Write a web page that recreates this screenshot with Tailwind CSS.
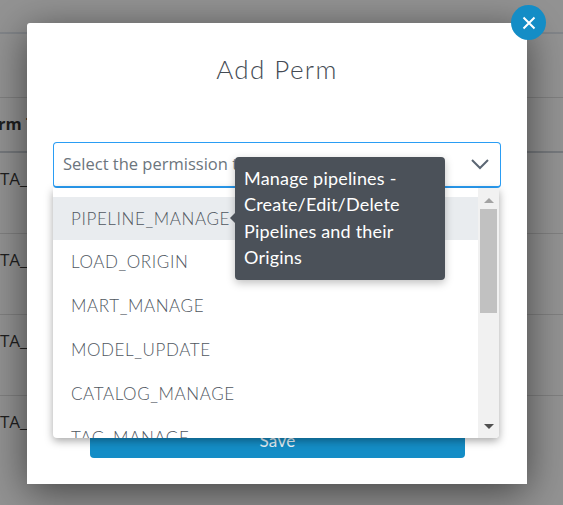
<!DOCTYPE html>
<html>
<head>
<meta charset="utf-8">
<script src="https://cdn.jsdelivr.net/npm/@tailwindcss/browser@4"></script>
</head>
<body class="m-0">
<div class="relative w-[563px] h-[505px] overflow-hidden bg-[#939393] font-['Open_Sans',sans-serif]">
  <!-- page behind the overlay -->
  <div class="flex flex-col text-[#1f1f1f] text-[17px]">
    <div class="h-[34px] border-b-2 border-[#828589]"></div>
    <div class="h-[64px] border-b border-[#808080]"></div>
    <div class="h-[55px] border-b-2 border-[#76797d] flex items-center"><span class="font-bold text-[16.5px] -ml-[2px] whitespace-nowrap">rm T</span></div>
    <div class="h-[81px] border-b border-[#808080] pt-[13px]"><span class="block">TA_</span></div>
    <div class="h-[81px] border-b border-[#808080] pt-[13px]"><span class="block">TA_</span></div>
    <div class="h-[81px] border-b border-[#808080] pt-[13px]"><span class="block">TA_</span></div>
    <div class="pt-[13px]"><span class="block">TA_</span></div>
  </div>

  <!-- modal -->
  <div class="absolute left-[27px] top-[23px] w-[500px] h-[461px] bg-white rounded-t-[3px] shadow-[0_8px_40px_rgba(0,0,0,0.55)] px-[26px]">
    <h2 class="pt-[27px] h-[119px] text-center text-[26px] tracking-[1.4px] leading-[38px] font-light text-[#444b54] font-['Lato',sans-serif]">Add Perm</h2>
    <div class="h-[46px] w-[448px] border border-[#2a9df4] border-b-2 rounded-[4px] flex items-center justify-between pl-[9px] pr-[11px] text-[16.5px] text-[#6c757d]">
      <span>Select the permission type</span>
      <svg width="18" height="11" viewBox="0 0 18 11" fill="none" stroke="#5b6673" stroke-width="2"><path d="M1 1l8 8 8-8"/></svg>
    </div>
    <button class="mt-[236px] ml-[37px] block w-[375px] h-[34px] bg-[#148dc6] rounded-[4px] text-white/90 text-[17px] tracking-[0.3px] font-['Lato',sans-serif]">Save</button>
  </div>

  <!-- dropdown -->
  <div class="absolute left-[53px] top-[188px] w-[446px] h-[250px] bg-white rounded-b-[4px] shadow-[0_3px_8px_rgba(0,0,0,0.35)] overflow-hidden flex">
    <ul class="flex-1 pt-[9px] text-[17px] tracking-[0.6px] text-[#50575f] font-['Lato',sans-serif] font-light">
      <li class="h-[43px] pl-[18px] flex items-center bg-[#e9ecef]">PIPELINE_MANAGE</li>
      <li class="h-[44px] pl-[18px] flex items-center">LOAD_ORIGIN</li>
      <li class="h-[44px] pl-[18px] flex items-center">MART_MANAGE</li>
      <li class="h-[44px] pl-[18px] flex items-center">MODEL_UPDATE</li>
      <li class="h-[44px] pl-[18px] flex items-center">CATALOG_MANAGE</li>
      <li class="h-[44px] pl-[18px] flex items-center">TAG_MANAGE</li>
    </ul>
    <div class="w-[21px] bg-[#f1f1f1] flex flex-col items-center">
      <svg class="mt-[10px]" width="10" height="5" viewBox="0 0 10 5"><path d="M5 0l5 5H0z" fill="#a3a3a3"/></svg>
      <div class="mt-[6px] w-[17px] h-[104px] bg-[#c1c1c1]"></div>
      <svg class="mt-auto mb-[9px]" width="10" height="5" viewBox="0 0 10 5"><path d="M0 0h10L5 5z" fill="#505050"/></svg>
    </div>
  </div>

  <!-- tooltip -->
  <div class="absolute left-[235px] top-[157px] w-[210px] h-[123px] bg-[#4b5159] rounded-[4px] shadow-[0_3px_8px_rgba(0,0,0,0.25)] pl-[9px] pt-[8px] text-white text-[18px] tracking-[0.2px] leading-[26.3px] font-['Lato',sans-serif]">
    <span class="absolute -left-[5px] top-[56px] w-0 h-0 border-y-[5px] border-y-transparent border-r-[5px] border-r-[#4b5159]"></span>
    Manage pipelines -<br>Create/Edit/Delete<br>Pipelines and their<br>Origins
  </div>

  <!-- close -->
  <div class="absolute left-[511px] top-[5px] w-[35px] h-[35px] rounded-full bg-[#148dc6] flex items-center justify-center">
    <svg width="14" height="14" viewBox="0 0 14 14" stroke="#fff" stroke-width="2" fill="none"><path d="M1.5 1.5l11 11M12.5 1.5l-11 11"/></svg>
  </div>
</div>
</body>
</html>
